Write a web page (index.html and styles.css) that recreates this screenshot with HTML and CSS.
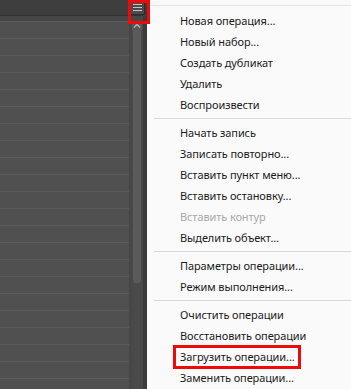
FILE: index.html
```html
<!DOCTYPE html>
<html lang="ru">
<head>
<meta charset="UTF-8">
<meta name="viewport" content="width=device-width, initial-scale=1.0">
<title>Операции</title>
<link rel="stylesheet" href="styles.css">
</head>
<body>
    <div class="panel">
        <div class="topbar">
            <div class="menu-btn">
                <span></span><span></span><span></span>
            </div>
            <div class="mark mark-btn"></div>
        </div>
        <div class="list-area">
            <ul class="rows">
                <li></li><li></li><li></li><li></li><li></li><li></li><li></li>
                <li></li><li></li><li></li><li></li><li></li><li></li><li></li>
                <li></li><li></li><li></li><li></li><li></li><li></li><li></li>
                <li></li>
            </ul>
            <div class="scrollbar">
                <div class="arrow">
                    <svg width="8" height="5" viewBox="0 0 8 5"><path d="M1 4.5 L4 1.5 L7 4.5" fill="none" stroke="#aaa" stroke-width="1.6"/></svg>
                </div>
                <div class="thumb"></div>
            </div>
        </div>
    </div>

    <div class="menu">
        <ul class="group">
            <li>Новая операция...</li>
            <li>Новый набор...</li>
            <li>Создать дубликат</li>
            <li>Удалить</li>
            <li>Воспроизвести</li>
        </ul>
        <ul class="group">
            <li>Начать запись</li>
            <li>Записать повторно...</li>
            <li>Вставить пункт меню...</li>
            <li>Вставить остановку...</li>
            <li class="disabled">Вставить контур</li>
            <li>Выделить объект...</li>
        </ul>
        <ul class="group">
            <li>Параметры операции...</li>
            <li>Режим выполнения...</li>
        </ul>
        <ul class="group">
            <li>Очистить операции</li>
            <li>Восстановить операции</li>
            <li><span class="mark-item">Загрузить операции...</span></li>
            <li>Заменить операции...</li>
        </ul>
    </div>
</body>
</html>
```

FILE: styles.css
```css
html, body {
    margin: 0;
    padding: 0;
    height: 100%;
    overflow: hidden;
}

body {
    display: flex;
    font-family: "Noto Sans", "Open Sans", sans-serif;
    font-size: 11px;
    letter-spacing: -0.1px;
    background-color: #fafafa;
}

ul {
    list-style: none;
    margin: 0;
    padding: 0;
}

/* dark panel */
.panel {
    width: 143px;
    border-right: 4px solid #3b3b3b;
    background-color: #505050;
    display: flex;
    flex-direction: column;
}

.topbar {
    position: relative;
    height: 24px;
    background-color: #3e3e3e;
    border-bottom: 1px solid #333;
    display: flex;
    justify-content: flex-end;
    align-items: center;
}

.menu-btn {
    width: 13px;
    height: 13px;
    margin-right: -2px;
    background-color: #4b4b4b;
    border: 1px solid #2c2c2c;
    display: flex;
    flex-direction: column;
    justify-content: center;
    align-items: center;
    gap: 2px;
}

.menu-btn span {
    display: block;
    width: 9px;
    height: 1px;
    background-color: #c4c4c4;
}

.mark {
    position: absolute;
    border: 3px solid #ee0a0a;
}

.mark-btn {
    left: 128px;
    top: 0;
    width: 16px;
    height: 18px;
}

.list-area {
    flex: 1;
    display: flex;
    padding-top: 5px;
    background-color: #474747;
}

.rows {
    width: 129px;
    background-color: #505050;
    border-top: 1px solid #5a5a5a;
}

.rows li {
    height: 16px;
    border-bottom: 1px solid #5c5c5c;
}

.scrollbar {
    width: 10px;
    margin-left: 3px;
    background-color: #4a4a4a;
    display: flex;
    flex-direction: column;
    align-items: center;
}

.arrow {
    width: 10px;
    height: 9px;
    background-color: #585858;
    border-radius: 3px 3px 0 0;
    display: flex;
    justify-content: center;
    align-items: center;
}

.thumb {
    width: 8px;
    height: 253px;
    background-color: #5b5b5b;
    border-radius: 0 0 3px 3px;
}

/* context menu */
.menu {
    flex: 1;
    margin-top: 5px;
    border-top: 1px solid #e6e6e6;
    padding-top: 4px;
    color: #1b1b1b;
}

.group li {
    height: 21px;
    line-height: 21px;
    padding-left: 33px;
    white-space: nowrap;
}

.group + .group {
    margin-top: 3px;
    padding-top: 3px;
    border-top: 1px solid #d9d9d9;
    margin-left: 7px;
}

.group + .group li {
    padding-left: 26px;
}

.group li.disabled {
    color: #a8a8a8;
}

.mark-item {
    position: relative;
    display: inline-block;
}

.mark-item::after {
    content: "";
    position: absolute;
    left: -7px;
    right: -6px;
    top: -1px;
    bottom: -2px;
    border: 3px solid #ee0a0a;
}
```
